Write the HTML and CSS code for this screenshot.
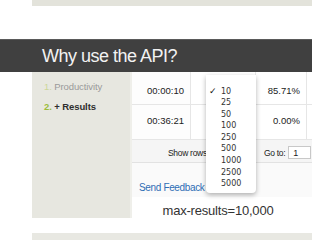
FILE: index.html
```html
<!DOCTYPE html>
<html>
<head>
<meta charset="utf-8">
<link rel="stylesheet" href="styles.css">
</head>
<body>
<div class="slide">
  <div class="top-strip"></div>
  <div class="title-bar"><h1 class="title">Why use the API?</h1></div>
  <div class="content">
    <ol class="sidebar">
      <li class="item dim"><span class="num">1.</span> Productivity</li>
      <li class="item active"><span class="num">2.</span> + Results</li>
    </ol>
    <div class="main">
      <div class="shot">
        <div class="row r1">
          <div class="cell c1">00:00:10</div>
          <div class="cell c2"></div>
          <div class="cell c3">85.71%</div>
          <div class="cell c4"></div>
        </div>
        <div class="row r2">
          <div class="cell c1">00:36:21</div>
          <div class="cell c2"></div>
          <div class="cell c3">0.00%</div>
          <div class="cell c4"></div>
        </div>
        <div class="toolbar">
          <span class="show">Show rows</span>
          <span class="goto">Go to:</span>
          <span class="input">1</span>
        </div>
        <div class="feedback"><span class="link">Send Feedback</span></div>
        <ul class="menu">
          <li class="opt"><span class="check">✓</span>10</li>
          <li class="opt">25</li>
          <li class="opt">50</li>
          <li class="opt">100</li>
          <li class="opt">250</li>
          <li class="opt">500</li>
          <li class="opt">1000</li>
          <li class="opt">2500</li>
          <li class="opt">5000</li>
        </ul>
      </div>
      <p class="caption">max-results=10,000</p>
    </div>
  </div>
  <div class="bottom-strip"></div>
</div>
</body>
</html>
```
FILE: styles.css
```css
html, body {
  margin: 0;
  padding: 0;
  background: #ffffff;
}
.slide {
  width: 320px;
  height: 240px;
  overflow: hidden;
  display: flex;
  flex-direction: column;
  font-family: "Liberation Sans", Arial, sans-serif;
}
.top-strip {
  margin-left: 32px;
  width: 280px;
  height: 6px;
  background: #e3e3db;
}
.title-bar {
  margin-top: 33px;
  width: 312px;
  height: 33px;
  box-sizing: border-box;
  background: #404040;
  border-top: 1px solid #5a5a5a;
  padding-left: 42px;
  padding-top: 1px;
}
.title {
  margin: 0;
  font-weight: normal;
  font-size: 18px;
  letter-spacing: -0.5px;
  line-height: 31px;
  color: #f2f2f2;
}
.content {
  display: flex;
  margin-left: 32px;
  width: 280px;
  height: 146px;
}
.sidebar {
  list-style: none;
  margin: 0;
  width: 100px;
  height: 146px;
  box-sizing: border-box;
  padding: 5px 0 0 12px;
  background: #e7e7e0;
  border-right: 2px solid #efefea;
  flex-shrink: 0;
}
.item {
  font-size: 9.5px;
  line-height: 20px;
  letter-spacing: -0.1px;
}
.item.dim { color: #9a9a9a; }
.item.dim .num { color: #cdd79a; }
.item.active { color: #2e2e2e; font-weight: bold; }
.item.active .num { color: #9cbd3a; }
.main {
  width: 180px;
  display: flex;
  flex-direction: column;
}
.shot {
  position: relative;
  height: 126px;
  background: #ffffff;
  font-family: "Liberation Sans", Arial, sans-serif;
  color: #222;
}
.row {
  display: flex;
  border-bottom: 1px solid #e6e6e6;
}
.r1 { height: 32px; }
.r2 { height: 34px; }
.cell {
  box-sizing: border-box;
  font-size: 9.5px;
  line-height: 11px;
  border-right: 1px solid #e6e6e6;
}
.r1 .cell { padding-top: 13px; }
.r2 .cell { padding-top: 10px; }
.c1 { width: 59px; padding-left: 15px; background: #fdfdfd; }
.c2 { width: 65px; }
.c3 { width: 51px; text-align: right; padding-right: 6px; }
.c4 { width: 5px; border-right: none; }
.toolbar {
  display: flex;
  align-items: center;
  height: 22px;
  background: #f5f5f5;
  border-bottom: 1px solid #e2e2e2;
  font-size: 8.5px;
  letter-spacing: -0.3px;
  color: #222;
}
.show { margin-left: 36px; padding-top: 3px; }
.goto { margin-left: 57px; padding-top: 3px; }
.input {
  margin-left: 3px;
  width: 23px;
  height: 13px;
  box-sizing: border-box;
  border: 1px solid #c8c8c8;
  background: #ffffff;
  padding-left: 4px;
  line-height: 12px;
  font-size: 9px;
  margin-top: 3px;
}
.feedback {
  height: 34px;
  box-sizing: border-box;
  padding: 14px 0 0 7px;
  background: #fafafa;
}
.link {
  color: #2f6db5;
  font-size: 10px;
  letter-spacing: -0.35px;
  line-height: 10px;
}
.menu {
  position: absolute;
  left: 74px;
  top: 3px;
  width: 50px;
  height: 118px;
  box-sizing: border-box;
  margin: 0;
  padding: 10.5px 0 0 15px;
  list-style: none;
  background: #ffffff;
  border-radius: 0 0 4px 4px;
  box-shadow: 0 2px 5px rgba(0, 0, 0, 0.3);
  font-family: "DejaVu Sans", sans-serif;
  font-size: 8px;
  line-height: 11.6px;
  color: #333;
}
.opt { position: relative; }
.check {
  position: absolute;
  left: -12px;
  top: 0;
  font-size: 9px;
  font-weight: bold;
  color: #111;
}
.caption {
  margin: 6px 0 0 0;
  padding-right: 8px;
  text-align: center;
  font-size: 13px;
  letter-spacing: -0.2px;
  line-height: 16px;
  color: #333;
}
.bottom-strip {
  margin-top: 15px;
  margin-left: 32px;
  width: 280px;
  height: 7px;
  background: #e8e8e2;
}
```
